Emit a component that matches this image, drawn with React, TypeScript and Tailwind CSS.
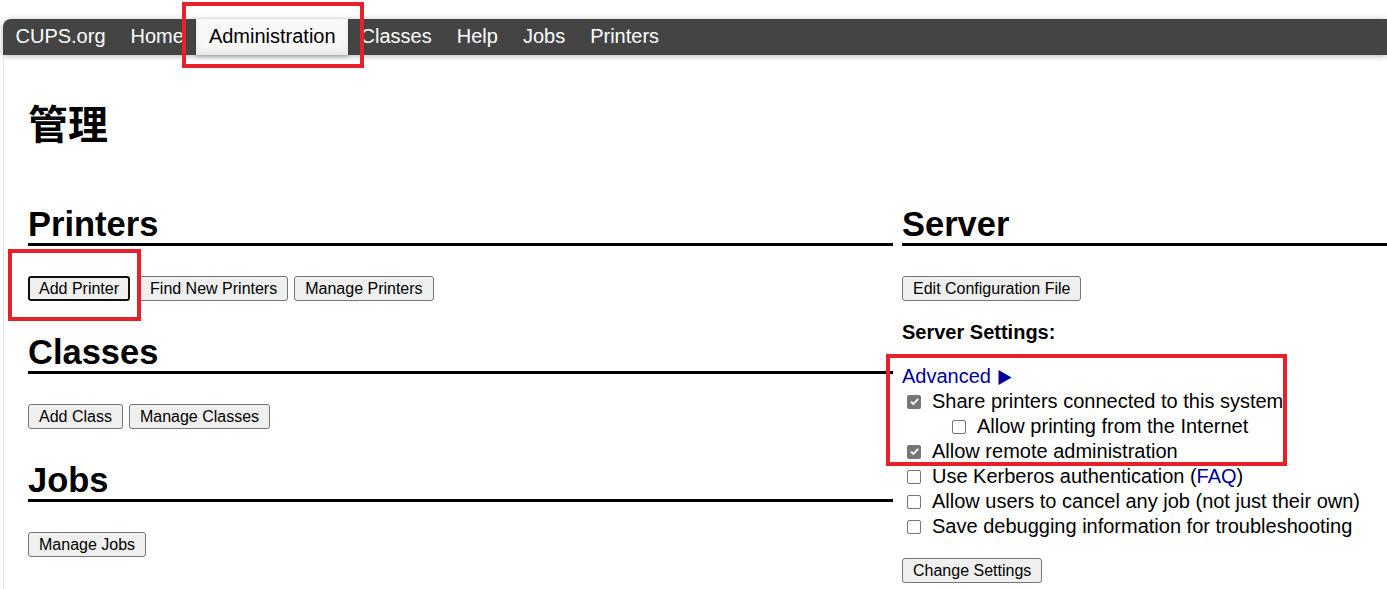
import React from 'react';

const navItems = ['CUPS.org', 'Home', 'Administration', 'Classes', 'Help', 'Jobs', 'Printers'];

function Btn({ children, focused }: { children: React.ReactNode; focused?: boolean }) {
  return (
    <button
      className={
        'h-[25px] rounded-[3px] bg-[#efefef] text-[16px] leading-none text-black ' +
        (focused ? 'border-2 border-[#101010] px-[9px] mr-[3px]' : 'border border-[#767676] px-[10px]')
      }
    >
      {children}
    </button>
  );
}

function Section({ title, children }: { title: string; children: React.ReactNode }) {
  return (
    <div>
      <h2 className="text-[34.5px] font-bold leading-[38px] border-b-[3px] border-black">{title}</h2>
      <div className="mt-[30px] flex gap-[6px]">{children}</div>
    </div>
  );
}

function Check({ checked }: { checked?: boolean }) {
  if (checked) {
    return (
      <span className="w-[14px] h-[14px] rounded-[2px] bg-[#767676] flex items-center justify-center shrink-0">
        <svg width="11" height="11" viewBox="0 0 10 10">
          <path d="M1.8 5.2 L4 7.3 L8.3 2.6" fill="none" stroke="white" strokeWidth="1.7" />
        </svg>
      </span>
    );
  }
  return <span className="w-[14px] h-[14px] rounded-[2px] border border-[#767676] bg-white shrink-0" />;
}

function Row({ checked, indent, children }: { checked?: boolean; indent?: boolean; children: React.ReactNode }) {
  return (
    <div className={'flex items-center h-[25px] ' + (indent ? 'pl-[50px]' : 'pl-[5px]')}>
      <Check checked={checked} />
      <span className="ml-[11px]">{children}</span>
    </div>
  );
}

export default function App() {
  return (
    <div
      className="relative h-[589px] bg-white text-black pt-[19px] pl-[3px] overflow-hidden"
      style={{ fontFamily: '"Liberation Sans", Arial, "Noto Sans CJK SC", sans-serif' }}
    >
      <nav className="h-[36px] bg-[#444] rounded-tl-[8px] flex text-[20px] leading-[34px] text-white shadow-[0_1px_6px_rgba(0,0,0,0.3)]">
        {navItems.map((item) =>
          item === 'Administration' ? (
            <span
              key={item}
              className="px-[12.5px] bg-[#f8f8f8] text-black shadow-[inset_0_-4px_6px_rgba(0,0,0,0.08),0_2px_4px_rgba(0,0,0,0.2)]"
            >
              {item}
            </span>
          ) : (
            <span key={item} className="px-[12.5px]">
              {item}
            </span>
          )
        )}
      </nav>

      <main className="h-full border-l border-[#e4e4e4] pl-[24px]">
        <h1 className="pt-[46px] text-[40px] leading-[48px] font-bold">管理</h1>

        <div className="mt-[56px] flex gap-[9px]">
          <div className="w-[865px] shrink-0 flex flex-col gap-[32px]">
            <Section title="Printers">
              <Btn focused>Add Printer</Btn>
              <Btn>Find New Printers</Btn>
              <Btn>Manage Printers</Btn>
            </Section>
            <Section title="Classes">
              <Btn>Add Class</Btn>
              <Btn>Manage Classes</Btn>
            </Section>
            <Section title="Jobs">
              <Btn>Manage Jobs</Btn>
            </Section>
          </div>

          <div className="flex-1">
            <h2 className="text-[34.5px] font-bold leading-[38px] border-b-[3px] border-black">Server</h2>
            <div className="mt-[30px]">
              <Btn>Edit Configuration File</Btn>
            </div>
            <div className="mt-[19px] text-[20px] leading-[25px] font-bold">Server Settings:</div>
            <div className="mt-[19px] text-[20px] leading-[25px]">
              <div className="h-[25px] text-[#000099]">
                Advanced <span className="text-[16px]">▶</span>
              </div>
              <Row checked>Share printers connected to this system</Row>
              <Row indent>Allow printing from the Internet</Row>
              <Row checked>Allow remote administration</Row>
              <Row>
                Use Kerberos authentication (<span className="text-[#000099]">FAQ</span>)
              </Row>
              <Row>Allow users to cancel any job (not just their own)</Row>
              <Row>Save debugging information for troubleshooting</Row>
            </div>
            <div className="mt-[19px]">
              <Btn>Change Settings</Btn>
            </div>
          </div>
        </div>
      </main>

      <div className="absolute left-[182px] top-[2px] w-[182px] h-[66px] border-[4px] border-[#e62129] pointer-events-none" />
      <div className="absolute left-[8px] top-[249px] w-[133px] h-[72px] border-[4px] border-[#e62129] pointer-events-none" />
      <div className="absolute left-[886px] top-[354px] w-[401px] h-[112px] border-[4px] border-[#e62129] pointer-events-none" />
    </div>
  );
}
